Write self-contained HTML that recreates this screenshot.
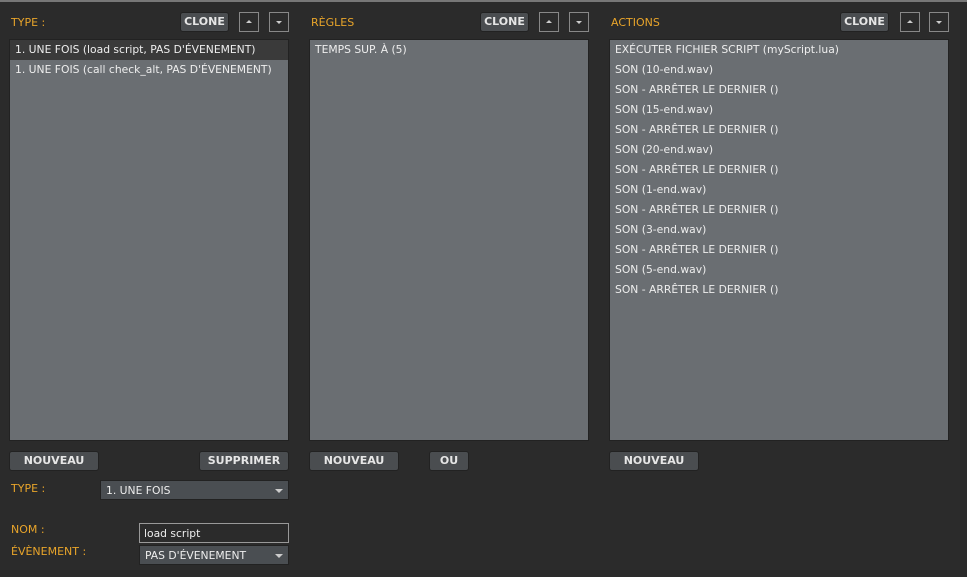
<!DOCTYPE html><html><head><style>
body{margin:0;width:967px;height:577px;background:#2b2b2b;position:relative;overflow:hidden;font-family:"DejaVu Sans","Liberation Sans",sans-serif;font-size:10.75px;color:#ddd}
.a{position:absolute}
.top{left:0;top:0;width:967px;height:2px;background:#777;}
.lbl{color:#e8a42a;font-size:11px}
.btn{position:absolute;background:#4a4d50;border:1px solid #222;border-radius:3px;color:#e6e6e6;font-weight:bold;font-size:11px;text-align:center;box-sizing:border-box;line-height:17px}
.arr{position:absolute;width:20px;height:20px;border:1px solid #888;box-sizing:border-box}
.up:after{content:"";position:absolute;left:6px;top:7px;border:3px solid transparent;border-bottom:3px solid #ccc;border-top:0}
.dn:after{content:"";position:absolute;left:6px;top:8px;border:3px solid transparent;border-top:3px solid #ccc;border-bottom:0}
.list{position:absolute;top:39px;height:402px;background:#6a6e72;border:1px solid #222;box-sizing:border-box}
.row{height:20px;line-height:20px;padding-left:5px;white-space:nowrap;color:#eee}
.sel{background:#3a3a3a}
.dd{position:absolute;background:#4a4e52;border:1px solid #222;box-sizing:border-box;height:20px;line-height:19px;padding-left:5px;color:#eee}
.dd:after{content:"";position:absolute;right:5px;top:8px;border:4px solid transparent;border-top:4px solid #ccc;border-bottom:0}
</style></head><body>
<div class="a top"></div>
<div class="a lbl" style="left:11px;top:16px">TYPE :</div>
<div class="a lbl" style="left:311px;top:16px">RÈGLES</div>
<div class="a lbl" style="left:611px;top:16px">ACTIONS</div>
<div class="btn" style="left:180px;top:12px;width:49px;height:20px">CLONE</div>
<div class="arr up" style="left:239px;top:12px"></div><div class="arr dn" style="left:269px;top:12px"></div>
<div class="btn" style="left:480px;top:12px;width:49px;height:20px">CLONE</div>
<div class="arr up" style="left:539px;top:12px"></div><div class="arr dn" style="left:569px;top:12px"></div>
<div class="btn" style="left:840px;top:12px;width:49px;height:20px">CLONE</div>
<div class="arr up" style="left:900px;top:12px"></div><div class="arr dn" style="left:929px;top:12px"></div>
<div class="list" style="left:9px;width:280px">
<div class="row sel">1. UNE FOIS (load script, PAS D'ÉVENEMENT)</div>
<div class="row">1. UNE FOIS (call check_alt, PAS D'ÉVENEMENT)</div></div>
<div class="list" style="left:309px;width:280px"><div class="row">TEMPS SUP. À (5)</div></div>
<div class="list" style="left:609px;width:340px">
<div class="row">EXÉCUTER FICHIER SCRIPT (myScript.lua)</div>
<div class="row">SON (10-end.wav)</div><div class="row">SON - ARRÊTER LE DERNIER ()</div>
<div class="row">SON (15-end.wav)</div><div class="row">SON - ARRÊTER LE DERNIER ()</div>
<div class="row">SON (20-end.wav)</div><div class="row">SON - ARRÊTER LE DERNIER ()</div>
<div class="row">SON (1-end.wav)</div><div class="row">SON - ARRÊTER LE DERNIER ()</div>
<div class="row">SON (3-end.wav)</div><div class="row">SON - ARRÊTER LE DERNIER ()</div>
<div class="row">SON (5-end.wav)</div><div class="row">SON - ARRÊTER LE DERNIER ()</div></div>
<div class="btn" style="left:9px;top:451px;width:90px;height:20px">NOUVEAU</div>
<div class="btn" style="left:199px;top:451px;width:90px;height:20px">SUPPRIMER</div>
<div class="btn" style="left:309px;top:451px;width:90px;height:20px">NOUVEAU</div>
<div class="btn" style="left:429px;top:451px;width:40px;height:20px">OU</div>
<div class="btn" style="left:609px;top:451px;width:90px;height:20px">NOUVEAU</div>
<div class="a lbl" style="left:11px;top:482px">TYPE :</div>
<div class="dd" style="left:100px;top:480px;width:189px">1. UNE FOIS</div>
<div class="a lbl" style="left:11px;top:523px">NOM :</div>
<div class="a" style="left:139px;top:523px;width:150px;height:20px;border:1px solid #999;box-sizing:border-box;background:#2b2b2b;line-height:19px;padding-left:4px;color:#eee">load script</div>
<div class="a lbl" style="left:11px;top:545px">ÉVÈNEMENT :</div>
<div class="dd" style="left:139px;top:545px;width:150px">PAS D'ÉVENEMENT</div>
</body></html>
